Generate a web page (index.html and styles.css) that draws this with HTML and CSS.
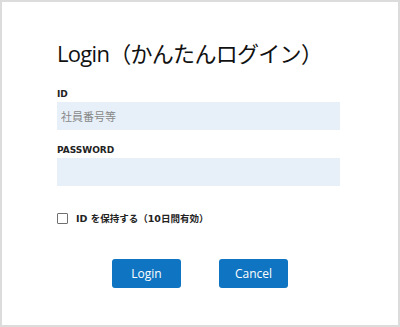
FILE: index.html
```html
<!DOCTYPE html>
<html lang="ja">
<head>
<meta charset="utf-8">
<link rel="stylesheet" href="styles.css">
</head>
<body>
<div class="card">
  <h1 class="title">Login（かんたんログイン）</h1>
  <div class="field">
    <label class="label">ID</label>
    <div class="input placeholder">社員番号等</div>
  </div>
  <div class="field">
    <label class="label">PASSWORD</label>
    <div class="input"></div>
  </div>
  <div class="remember">
    <span class="box"></span>
    <span class="remember-text">ID を保持する（10日間有効）</span>
  </div>
  <div class="actions">
    <span class="btn">Login</span>
    <span class="btn">Cancel</span>
  </div>
</div>
</body>
</html>
```
FILE: styles.css
```css
html, body {
  margin: 0;
  padding: 0;
  background: #ffffff;
}
body {
  font-family: "DejaVu Sans", "Noto Sans CJK JP", sans-serif;
  color: #111;
}
.card {
  box-sizing: border-box;
  width: 400px;
  height: 327px;
  border: 2px solid #dcdcdc;
  padding: 36px 58px 0 55px;
}
.title {
  margin: 0;
  font-family: "Open Sans", "Noto Sans CJK JP", sans-serif;
  font-weight: 400;
  font-size: 22px;
  letter-spacing: -0.7px;
  line-height: 30px;
  color: #111;
}
.field {
  margin-top: 20px;
}
.field + .field {
  margin-top: 14px;
}
.label {
  display: block;
  font-size: 9px;
  font-weight: bold;
  line-height: 12px;
  margin-bottom: 2px;
  color: #222;
}
.input {
  height: 28px;
  background: #e7f0f9;
  box-sizing: border-box;
  padding: 0 4px;
  font-family: "Noto Sans CJK JP", sans-serif;
  font-size: 11px;
  line-height: 28px;
  color: #888;
}
.remember {
  display: flex;
  align-items: center;
  gap: 8px;
  margin-top: 25px;
}
.box {
  box-sizing: border-box;
  width: 11px;
  height: 11px;
  border: 1.5px solid #707070;
  border-radius: 1px;
  background: #fff;
}
.remember-text {
  font-family: "DejaVu Sans", "Noto Sans CJK JP", sans-serif;
  font-size: 9.5px;
  font-weight: bold;
  color: #222;
}
.actions {
  display: flex;
  justify-content: center;
  gap: 38px;
  margin-top: 34px;
  margin-left: 3px;
}
.btn {
  width: 69px;
  height: 29px;
  background: #0f74c1;
  border-radius: 3px;
  color: #fff;
  font-family: "Open Sans", sans-serif;
  font-size: 12px;
  line-height: 29px;
  text-align: center;
}
```
